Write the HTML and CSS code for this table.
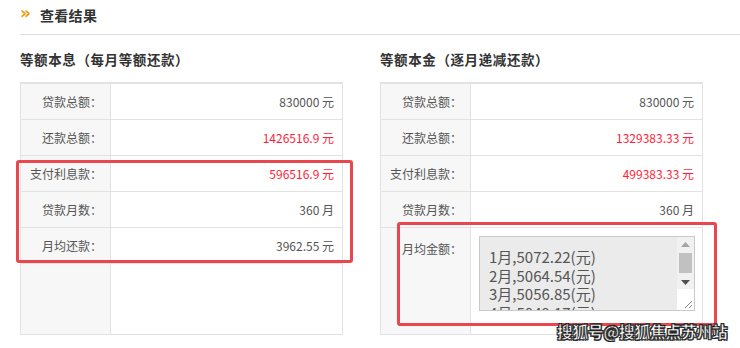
FILE: index.html
```html
<!DOCTYPE html>
<html lang="zh">
<head>
<meta charset="utf-8">
<link rel="stylesheet" href="styles.css">
</head>
<body>
<div class="page">
  <div class="head">
    <span class="chev">»</span>
    <span class="head-title">查看结果</span>
  </div>
  <div class="cols">
    <div class="col">
      <div class="sec-title">等额本息（每月等额还款）</div>
      <div class="tbl">
        <div class="row"><div class="lab">贷款总额：</div><div class="val">830000 元</div></div>
        <div class="row"><div class="lab">还款总额：</div><div class="val red">1426516.9 元</div></div>
        <div class="row"><div class="lab">支付利息款：</div><div class="val red">596516.9 元</div></div>
        <div class="row"><div class="lab">贷款月数：</div><div class="val">360 月</div></div>
        <div class="row"><div class="lab">月均还款：</div><div class="val">3962.55 元</div></div>
        <div class="row fill"><div class="lab"></div><div class="val"></div></div>
      </div>
    </div>
    <div class="col">
      <div class="sec-title">等额本金（逐月递减还款）</div>
      <div class="tbl">
        <div class="row"><div class="lab">贷款总额：</div><div class="val">830000 元</div></div>
        <div class="row"><div class="lab">还款总额：</div><div class="val red">1329383.33 元</div></div>
        <div class="row"><div class="lab">支付利息款：</div><div class="val red">499383.33 元</div></div>
        <div class="row"><div class="lab">贷款月数：</div><div class="val">360 月</div></div>
        <div class="row fill last"><div class="lab top">月均金额：</div>
          <div class="val top">
            <div class="ta">
              <div class="ta-text">1月,5072.22(元)<br>2月,5064.54(元)<br>3月,5056.85(元)<br>4月,5049.17(元)</div>
              <div class="sb">
                <div class="sb-btn"><svg width="9" height="5" viewBox="0 0 9 5"><path d="M0 5L4.5 0L9 5Z" fill="#a3a3a3"/></svg></div>
                <div class="sb-track"><div class="sb-thumb"></div></div>
                <div class="sb-btn"><svg width="9" height="5" viewBox="0 0 9 5"><path d="M0 0L4.5 5L9 0Z" fill="#505050"/></svg></div>
                <div class="sb-corner"><svg width="10" height="10" viewBox="0 0 10 10"><path d="M9 2L2 9M9 6L6 9" stroke="#888" stroke-width="1"/></svg></div>
              </div>
            </div>
          </div>
        </div>
      </div>
    </div>
  </div>
  <div class="mark mark-l"></div>
  <div class="mark mark-r"></div>
  <div class="wm">搜狐号@搜狐焦点苏州站</div>
</div>
</body>
</html>
```

FILE: styles.css
```css
* { box-sizing: border-box; }
html, body { margin: 0; padding: 0; background: #fff; }
body {
  width: 740px; height: 348px; overflow: hidden;
  font-family: "Noto Sans CJK SC", "Noto Sans", sans-serif;
  color: #555;
}
.page { position: relative; width: 740px; height: 348px; }
.head {
  margin-left: 20px;
  height: 35px;
  border-bottom: 1px solid #e0e0e0;
  display: flex; align-items: center;
  padding-bottom: 5px;
}
.chev {
  color: #f39800; font-weight: bold; font-size: 17px;
  width: 20px; line-height: 1; margin-top: -2px;
  font-family: "DejaVu Sans", sans-serif;
}
.head-title { font-size: 14px; font-weight: bold; color: #333; letter-spacing: 0.3px; }
.cols { display: flex; gap: 37px; padding-left: 20px; }
.col { width: 323px; }
.sec-title {
  font-size: 13.5px; font-weight: bold; color: #333; letter-spacing: 0.6px;
  height: 47px; padding-top: 14px; line-height: 20px;
}
.tbl {
  height: 253px;
  border: 1px solid #e2e2e2;
  border-top: 2px solid #e2e2e2;
  display: flex; flex-direction: column;
}
.row {
  display: flex; height: 36px; border-bottom: 1px solid #e2e2e2;
  font-size: 12px; line-height: 36px;
}
.row.fill { flex: 1; border-bottom: none; }
.lab {
  width: 90px; background: #f7f7f7; border-right: 1px solid #e2e2e2;
  text-align: right; padding-right: 8px; color: #555;
}
.val { flex: 1; text-align: right; padding-right: 8px; color: #555; }
.val.red { color: #ff1e3c; }
.top { line-height: 20px; }
.lab.top { padding-top: 11px; }
.val.top { padding: 8px 7px 0 8px; }
.ta {
  width: 216px; height: 75px;
  background: #ebebeb; border: 1px solid #cacaca;
  display: flex; text-align: left; overflow: hidden;
}
.ta-text {
  flex: 1; padding: 11px 0 0 9px;
  font-size: 15px; line-height: 18.6px; color: #555;
  white-space: nowrap; overflow: hidden;
}
.sb { width: 17px; background: #f1f1f1; display: flex; flex-direction: column; }
.sb-btn { height: 14px; display: flex; align-items: center; justify-content: center; }
.sb-track { height: 24px; padding: 2px 2px; }
.sb-thumb { height: 20px; background: #c1c1c1; }
.sb-corner {
  flex: 1; background: #fff;
  display: flex; align-items: flex-end; justify-content: flex-end;
  padding: 0 1px 1px 0;
}
.mark {
  position: absolute; border: 3px solid #e8484d; border-radius: 3px;
}
.mark-l { left: 16px; top: 160px; width: 337px; height: 103px; }
.mark-r { left: 397px; top: 222px; width: 320px; height: 104px; }
.wm {
  position: absolute; left: 557px; top: 320px;
  font-size: 15.5px; font-weight: bold; color: #fff; letter-spacing: 0;
  -webkit-text-stroke: 0.5px #222;
  text-shadow: 1px 1px 0 #222, -1px -1px 0 #222, 1px -1px 0 #222, -1px 1px 0 #222;
}
```
